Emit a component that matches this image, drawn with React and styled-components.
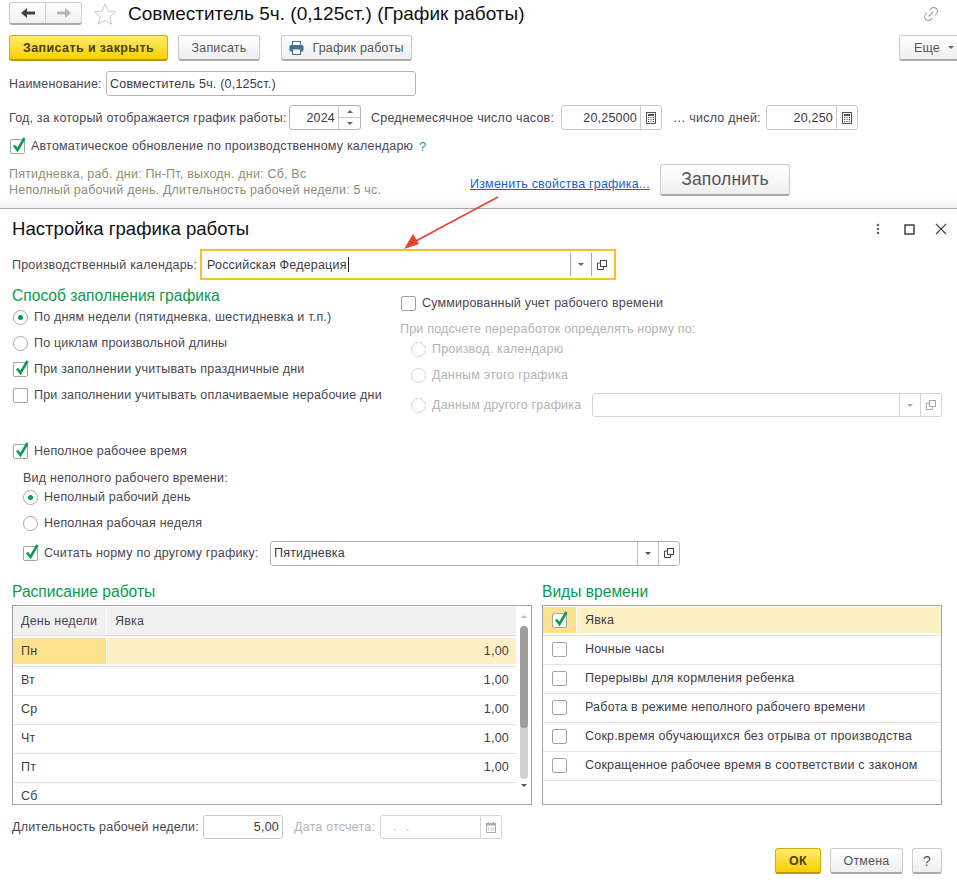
import React from 'react';
import styled, { createGlobalStyle } from 'styled-components';
import { Link2 } from 'lucide-react';

const GREEN = '#0b9a4e';
const TEXT = '#4a4650';
const DISABLED = '#b3b3b3';

const GlobalStyle = createGlobalStyle`
  html, body { margin: 0; padding: 0; background: #fff; }
  body {
    font-family: "Liberation Sans", Arial, sans-serif;
    font-size: 12.5px;
    letter-spacing: 0.2px;
    color: ${TEXT};
  }
`;

const Page = styled.div`
  position: relative;
  width: 957px;
  height: 886px;
  overflow: hidden;
  background: #fff;
`;

const Arrow = styled.svg`
  position: absolute;
  left: 400px;
  top: 190px;
  pointer-events: none;
`;

const Top = styled.section`
  box-sizing: border-box;
  height: 209px;
  padding: 2px 0 0 9px;
  border-bottom: 1px solid #a8a8a8;
  background: linear-gradient(to bottom, #fff 0, #fff 198px, #f1f1f1 208px);
`;

const Row = styled.div`
  display: flex;
  align-items: center;
  height: ${p => p.$h}px;
  margin-top: ${p => p.$top || 0}px;
  margin-left: ${p => p.$left || 0}px;
`;

const NavGroup = styled.div`
  box-sizing: border-box;
  display: flex;
  width: 73px;
  height: 23px;
  border: 1px solid #cdcdcd;
  border-bottom: 2px solid #a9a9a9;
  border-radius: 3px;
  background: linear-gradient(#fff, #f1f1f1);
`;

const NavButton = styled.div`
  flex: 1;
  display: flex;
  align-items: center;
  justify-content: center;
  & + & { border-left: 1px solid #d4d4d4; }
`;

const StarBox = styled.div`
  display: flex;
  margin: 0 11px 0 11px;
`;

const Title = styled.h1`
  margin: 0;
  font-size: 19px;
  font-weight: normal;
  letter-spacing: 0;
  color: #111;
  white-space: nowrap;
`;

const LinkBox = styled.div`
  display: flex;
  margin-left: auto;
  margin-right: 17px;
  color: #9a9a9a;
  transform: rotate(-45deg);
`;

const Button = styled.button`
  box-sizing: border-box;
  display: flex;
  align-items: center;
  justify-content: center;
  gap: 8px;
  width: ${p => p.$w}px;
  height: ${p => p.$h || 26}px;
  margin-left: ${p => p.$left || 0}px;
  padding: 0;
  flex: none;
  font-family: inherit;
  font-size: ${p => p.$size || 12.5}px;
  font-weight: ${p => (p.$primary ? 'bold' : 'normal')};
  letter-spacing: ${p => (p.$primary ? '0.4px' : '0.2px')};
  color: ${p => (p.$primary ? '#4c4008' : '#555')};
  border: 1px solid ${p => (p.$primary ? '#d0ae00' : '#cbcbcb')};
  border-bottom: 2px solid ${p => (p.$primary ? '#b89a00' : '#a9a9a9')};
  border-radius: 3px;
  background: ${p =>
    p.$primary
      ? 'linear-gradient(#ffec6e, #f7d000)'
      : 'linear-gradient(#fff, #efefef)'};
`;

const Caret = styled.span`
  width: 0;
  height: 0;
  border-left: 3px solid transparent;
  border-right: 3px solid transparent;
  border-${p => (p.$up ? 'bottom' : 'top')}: 3px solid ${p => p.$color || '#666'};
`;

const Label = styled.span`
  box-sizing: border-box;
  flex: none;
  width: ${p => (p.$w ? `${p.$w}px` : 'auto')};
  padding-left: ${p => p.$pad || 0}px;
  color: ${p => (p.$disabled ? DISABLED : TEXT)};
  white-space: nowrap;
`;

const Field = styled.div`
  box-sizing: border-box;
  display: flex;
  align-items: stretch;
  flex: none;
  width: ${p => p.$w}px;
  height: ${p => p.$h || 25}px;
  border: 1px solid ${p => p.$border || '#c9c9c9'};
  border-radius: 3px;
  background: #fff;
`;

const FocusField = styled(Field)`
  border: 2px solid #fac21f;
  border-radius: 0;
  padding: 2px 2px 2px 0;
`;

const FieldText = styled.span`
  flex: 1;
  display: flex;
  align-items: center;
  justify-content: ${p => (p.$right ? 'flex-end' : 'flex-start')};
  padding: 0 ${p => (p.$right ? 3 : 0)}px 0 ${p => (p.$right ? 0 : p.$pad || 3)}px;
  color: ${p => (p.$disabled ? DISABLED : '#3d3a42')};
  white-space: nowrap;
`;

const DateMask = styled.span`
  letter-spacing: 3px;
  white-space: pre;
`;

const Cursor = styled.span`
  width: 1px;
  height: 15px;
  margin-left: 1px;
  background: #222;
`;

const FieldButton = styled.span`
  box-sizing: border-box;
  display: flex;
  align-items: center;
  justify-content: center;
  flex: none;
  width: ${p => p.$w || 21}px;
  border-left: 1px solid ${p => p.$line || '#c9c9c9'};
`;

const SpinBox = styled.span`
  display: flex;
  flex-direction: column;
  flex: none;
  width: 21px;
  border-left: 1px solid #c9c9c9;
`;

const SpinPart = styled.span`
  flex: 1;
  display: flex;
  align-items: center;
  justify-content: center;
  & + & { border-top: 1px solid #c9c9c9; }
`;

const GrayNote = styled.div`
  box-sizing: border-box;
  flex: none;
  width: 461px;
  padding-top: 4px;
  line-height: 16px;
  color: #8f8d78;
`;

const LinkText = styled.a`
  flex: none;
  width: 190px;
  padding-top: 8px;
  color: #1d5fc2;
  text-decoration: underline;
  white-space: nowrap;
`;

const Help = styled.span`
  color: #2a8fc9;
  font-size: 13px;
`;

const Dialog = styled.section`
  padding-left: 12px;
`;

const DialogHead = styled.header`
  display: flex;
  align-items: center;
  height: 40px;
`;

const DialogTitle = styled.h2`
  margin: 0;
  font-size: 18.6px;
  font-weight: normal;
  letter-spacing: 0;
  color: #111;
`;

const WindowIcons = styled.div`
  display: flex;
  align-items: center;
  gap: 18px;
  margin-left: auto;
  margin-right: 10px;
`;

const Columns = styled.div`
  display: flex;
  height: 130px;
  margin-top: 7px;
`;

const LeftColumn = styled.div`
  flex: none;
  width: 388px;
`;

const RightColumn = styled.div`
  padding-top: 3px;
`;

const SectionTitle = styled.h3`
  margin: 0;
  height: 18px;
  line-height: 18px;
  font-size: 15.6px;
  font-weight: normal;
  letter-spacing: 0;
  color: ${GREEN};
  white-space: nowrap;
`;

const Option = styled.div`
  display: flex;
  align-items: center;
  gap: 6px;
  height: ${p => p.$h || 26}px;
  margin-left: ${p => p.$left || 1}px;
  margin-top: ${p => p.$top || 0}px;
  color: ${p => (p.$disabled ? DISABLED : TEXT)};
  white-space: nowrap;
`;

const BoxShape = styled.span`
  position: relative;
  box-sizing: border-box;
  display: block;
  flex: none;
  width: 15px;
  height: 15px;
  border: 1px solid #a3a3a3;
  border-radius: 2px;
  background: #fff;
`;

const CheckMark = styled.svg`
  position: absolute;
  left: 0;
  top: -4px;
`;

const RadioShape = styled.span`
  box-sizing: border-box;
  display: flex;
  align-items: center;
  justify-content: center;
  flex: none;
  width: 15px;
  height: 15px;
  border: 1px solid ${p => (p.$disabled ? '#d4d4d4' : '#a9a9a9')};
  border-radius: 50%;
  background: #fff;
`;

const RadioDot = styled.span`
  width: 5px;
  height: 5px;
  border-radius: 50%;
  background: ${GREEN};
`;

const Tables = styled.div`
  display: flex;
  margin-top: 17px;
`;

const TableColumn = styled.div`
  flex: none;
  width: ${p => p.$w}px;
  margin-left: ${p => p.$left || 0}px;
`;

const TableFrame = styled.div`
  box-sizing: border-box;
  display: flex;
  height: 200px;
  margin-top: 4px;
  border: 1px solid #a3a3a3;
  overflow: hidden;
`;

const TableBody = styled.div`
  flex: 1;
  min-width: 0;
  padding-top: 1px;
`;

const HeadRow = styled.div`
  display: grid;
  grid-template-columns: 93px 1fr;
  column-gap: 1px;
  height: 29px;
  margin-bottom: 2px;
  border-bottom: 1px solid #dcdcdc;
  box-sizing: border-box;
  background: #fff;
`;

const HeadCell = styled.div`
  display: flex;
  align-items: center;
  padding-left: 8px;
  background: #f1f1f1;
`;

const DataRow = styled.div`
  box-sizing: border-box;
  display: grid;
  grid-template-columns: ${p => p.$cols};
  column-gap: 1px;
  height: 29px;
  padding-bottom: 2px;
  border-bottom: 1px solid #e3e3e3;
  color: #3f3c45;
`;

const Cell = styled.div`
  display: flex;
  align-items: center;
  justify-content: ${p => (p.$right ? 'flex-end' : 'flex-start')};
  padding: ${p => (p.$right ? '0 7px 0 0' : p.$pad || '0 0 0 8px')};
  background: ${p => p.$bg || 'transparent'};
  white-space: nowrap;
`;

const ScrollBar = styled.div`
  position: relative;
  flex: none;
  display: flex;
  flex-direction: column;
  align-items: center;
  width: 15px;
  padding-top: 9px;
`;

const Track = styled.div`
  width: 8px;
  height: 153px;
  margin-top: 8px;
  border-radius: 4px;
  background: #d0d0d0;
  overflow: hidden;
`;

const Thumb = styled.div`
  height: 102px;
  border-radius: 4px;
  background: #9c9c9c;
`;

const ScrollEnd = styled.div`
  margin-top: 8px;
`;

const Footer = styled.div`
  display: flex;
  justify-content: flex-end;
  margin: 9px 15px 0 0;
`;

const Star = () => (
  <svg width="24" height="22" viewBox="0 0 24 22" fill="none">
    <path
      d="M12 1l3 7.2 7.6.6-5.8 5 1.8 7.4L12 17.3l-6.6 3.9 1.8-7.4-5.8-5L9 8.2z"
      stroke="#c9c9c9"
      strokeWidth="1"
    />
  </svg>
);

const NavArrow = ({ left, color }) => (
  <svg width="14" height="12" viewBox="0 0 14 12">
    <path
      d={left ? 'M0 6l6-5v3.4h8v3.2H6V11z' : 'M14 6L8 1v3.4H0v3.2h8V11z'}
      fill={color}
    />
  </svg>
);

const Printer = () => (
  <svg width="15" height="14" viewBox="0 0 15 14">
    <rect x="3.5" y="0.5" width="8" height="4" fill="#fff" stroke="#50708c" />
    <rect x="0.5" y="4" width="14" height="6.5" rx="1.5" fill="#46708f" />
    <rect x="3.5" y="8" width="8" height="5.5" fill="#fff" stroke="#50708c" />
  </svg>
);

const Calc = () => (
  <svg width="11" height="12" viewBox="0 0 11 12" fill="none">
    <rect x="0.5" y="0.5" width="9" height="11" stroke="#555" />
    <rect x="2" y="2" width="6" height="2" fill="#555" />
    <path
      d="M2 5.5h1.2M4.4 5.5h1.2M6.8 5.5H8M2 7.5h1.2M4.4 7.5h1.2M6.8 7.5H8M2 9.5h1.2M4.4 9.5h1.2M6.8 9.5H8"
      stroke="#555"
    />
  </svg>
);

const CalendarIcon = () => (
  <svg width="11" height="11" viewBox="0 0 11 11" fill="none">
    <rect x="0.5" y="1.5" width="9" height="9" stroke="#aaa" />
    <rect x="0.5" y="1.5" width="9" height="2" fill="#aaa" />
    <path d="M2.5 0v2M7.5 0v2M2 6h1.2M4.4 6h1.2M6.8 6H8M2 8h1.2M4.4 8h1.2M6.8 8H8" stroke="#aaa" />
  </svg>
);

const OpenIcon = ({ color = '#444' }) => (
  <svg width="10" height="10" viewBox="0 0 10 10" fill="none">
    <rect x="3.5" y="0.5" width="6" height="6" stroke={color} />
    <path d="M3 3H.5v6.5H6.5V7" stroke={color} />
  </svg>
);

const Check = ({ checked }) => (
  <BoxShape>
    {checked && (
      <CheckMark width="16" height="17" viewBox="0 0 16 17">
        <path d="M3 9.5l3.5 4.5L13.5 2" fill="none" stroke={GREEN} strokeWidth="2.6" />
      </CheckMark>
    )}
  </BoxShape>
);

const Radio = ({ on, disabled }) => (
  <RadioShape $disabled={disabled}>{on && <RadioDot />}</RadioShape>
);

const PickField = ({ w, h, value, disabled, line }) => (
  <Field $w={w} $h={h} $border={disabled ? '#d4d4d4' : '#b4b4b4'}>
    <FieldText $pad={3}>{value}</FieldText>
    <FieldButton $line={line}>
      <Caret $color={disabled ? '#aaa' : '#555'} />
    </FieldButton>
    <FieldButton $line={line}>
      <OpenIcon color={disabled ? '#aaa' : '#444'} />
    </FieldButton>
  </Field>
);

const days = ['Вт', 'Ср', 'Чт', 'Пт'];
const kinds = [
  'Ночные часы',
  'Перерывы для кормления ребенка',
  'Работа в режиме неполного рабочего времени',
  'Сокр.время обучающихся без отрыва от производства',
  'Сокращенное рабочее время в соответствии с законом',
];

export default function App() {
  return (
    <Page>
      <GlobalStyle />
      <Top>
        <Row $h={23}>
          <NavGroup>
            <NavButton><NavArrow left color="#444" /></NavButton>
            <NavButton><NavArrow color="#b5b5b5" /></NavButton>
          </NavGroup>
          <StarBox><Star /></StarBox>
          <Title>Совместитель 5ч. (0,125ст.) (График работы)</Title>
          <LinkBox><Link2 size={18} strokeWidth={1.4} /></LinkBox>
        </Row>
        <Row $h={26} $top={10}>
          <Button $w={159} $primary>Записать и закрыть</Button>
          <Button $w={82} $left={10}>Записать</Button>
          <Button $w={131} $left={21}><Printer />График работы</Button>
          <Button $w={70} $left={487}>Еще<Caret /></Button>
        </Row>
        <Row $h={25} $top={10}>
          <Label $w={97}>Наименование:</Label>
          <Field $w={310} $border="#b4b4b4"><FieldText>Совместитель 5ч. (0,125ст.)</FieldText></Field>
        </Row>
        <Row $h={25} $top={9}>
          <Label $w={280}>Год, за который отображается график работы:</Label>
          <Field $w={72} $border="#b4b4b4">
            <FieldText $right>2024</FieldText>
            <SpinBox>
              <SpinPart><Caret $up /></SpinPart>
              <SpinPart><Caret /></SpinPart>
            </SpinBox>
          </Field>
          <Label $w={200} $pad={10}>Среднемесячное число часов:</Label>
          <Field $w={101}>
            <FieldText $right>20,25000</FieldText>
            <FieldButton><Calc /></FieldButton>
          </Field>
          <Label $w={104} $pad={11}>… число дней:</Label>
          <Field $w={92}>
            <FieldText $right>20,250</FieldText>
            <FieldButton><Calc /></FieldButton>
          </Field>
        </Row>
        <Option $h={18} $top={7}>
          <Check checked />
          <span>Автоматическое обновление по производственному календарю</span>
          <Help>?</Help>
        </Option>
        <Row $h={32} $top={9}>
          <GrayNote>
            Пятидневка, раб. дни: Пн-Пт, выходн. дни: Сб, Вс
            <br />
            Неполный рабочий день. Длительность рабочей недели: 5 чс.
          </GrayNote>
          <LinkText>Изменить свойства графика...</LinkText>
          <Button $w={130} $h={32} $size={17.5}>Заполнить</Button>
        </Row>
      </Top>

      <Dialog>
        <DialogHead>
          <DialogTitle>Настройка графика работы</DialogTitle>
          <WindowIcons>
            <svg width="4" height="12" viewBox="0 0 4 12" fill="#666">
              <circle cx="2" cy="2" r="1.3" /><circle cx="2" cy="6" r="1.3" /><circle cx="2" cy="10" r="1.3" />
            </svg>
            <svg width="11" height="11" viewBox="0 0 11 11" fill="none" style={{ marginLeft: 6 }}>
              <rect x="1" y="1" width="9" height="9" stroke="#333" strokeWidth="1.4" />
            </svg>
            <svg width="12" height="12" viewBox="0 0 12 12" fill="none" style={{ marginLeft: 2 }}>
              <path d="M1 1l10 10M11 1L1 11" stroke="#444" strokeWidth="1.1" />
            </svg>
          </WindowIcons>
        </DialogHead>
        <Row $h={31}>
          <Label $w={188}>Производственный календарь:</Label>
          <FocusField $w={416} $h={31}>
            <FieldText $pad={5}>Российская Федерация<Cursor /></FieldText>
            <FieldButton $line="#a9a9a9"><Caret /></FieldButton>
            <FieldButton $line="#a9a9a9"><OpenIcon /></FieldButton>
          </FocusField>
        </Row>
        <Columns>
          <LeftColumn>
            <SectionTitle>Способ заполнения графика</SectionTitle>
            <Option $h={26} $top={-1}><Radio on />По дням недели (пятидневка, шестидневка и т.п.)</Option>
            <Option><Radio />По циклам произвольной длины</Option>
            <Option><Check checked />При заполнении учитывать праздничные дни</Option>
            <Option><Check />При заполнении учитывать оплачиваемые нерабочие дни</Option>
          </LeftColumn>
          <RightColumn>
            <Option $left={1}><Check />Суммированный учет рабочего времени</Option>
            <Row $h={18} $top={4}><Label $disabled>При подсчете переработок определять норму по:</Label></Row>
            <Option $left={11} $h={22} $disabled><Radio disabled />Производ. календарю</Option>
            <Option $left={11} $top={2} $disabled><Radio disabled />Данным этого графика</Option>
            <Option $left={11} $h={24} $top={5} $disabled>
              <Radio disabled />
              <Label $w={154} $disabled>Данным другого графика</Label>
              <PickField w={350} h={24} disabled line="#d4d4d4" />
            </Option>
          </RightColumn>
        </Columns>
        <Option $top={21}><Check checked />Неполное рабочее время</Option>
        <Row $h={18} $top={5} $left={11}><Label>Вид неполного рабочего времени:</Label></Row>
        <Option $left={11} $top={-3}><Radio on />Неполный рабочий день</Option>
        <Option $left={11}><Radio />Неполная рабочая неделя</Option>
        <Option $left={11} $top={4}>
          <Check checked />
          <Label $w={220}>Считать норму по другому графику:</Label>
          <PickField w={410} h={25} value="Пятидневка" line="#c4c4c4" />
        </Option>
        <Tables>
          <TableColumn $w={520}>
            <SectionTitle>Расписание работы</SectionTitle>
            <TableFrame>
              <TableBody>
                <HeadRow>
                  <HeadCell>День недели</HeadCell>
                  <HeadCell>Явка</HeadCell>
                </HeadRow>
                <DataRow $cols="93px 1fr">
                  <Cell $bg="#fee18d">Пн</Cell>
                  <Cell $bg="#fdf1c3" $right>1,00</Cell>
                </DataRow>
                {days.map(day => (
                  <DataRow key={day} $cols="93px 1fr">
                    <Cell>{day}</Cell>
                    <Cell $right>1,00</Cell>
                  </DataRow>
                ))}
                <DataRow $cols="93px 1fr">
                  <Cell>Сб</Cell>
                  <Cell />
                </DataRow>
              </TableBody>
              <ScrollBar>
                <Caret $up $color="#bbb" />
                <Track><Thumb /></Track>
                <ScrollEnd><Caret $color="#555" /></ScrollEnd>
              </ScrollBar>
            </TableFrame>
          </TableColumn>
          <TableColumn $w={400} $left={10}>
            <SectionTitle>Виды времени</SectionTitle>
            <TableFrame>
              <TableBody>
                <DataRow $cols="33px 1fr">
                  <Cell $bg="#fee18d" $pad="0 0 0 9px"><Check checked /></Cell>
                  <Cell $bg="#fdf1c3">Явка</Cell>
                </DataRow>
                {kinds.map(kind => (
                  <DataRow key={kind} $cols="33px 1fr">
                    <Cell $pad="0 0 0 9px"><Check /></Cell>
                    <Cell>{kind}</Cell>
                  </DataRow>
                ))}
              </TableBody>
            </TableFrame>
          </TableColumn>
        </Tables>
        <Row $h={24} $top={10}>
          <Label $w={191}>Длительность рабочей недели:</Label>
          <Field $w={80} $h={24}><FieldText $right>5,00</FieldText></Field>
          <Label $w={97} $pad={11} $disabled>Дата отсчета:</Label>
          <Field $w={122} $h={24} $border="#d4d4d4">
            <FieldText $pad={12} $disabled><DateMask>. .</DateMask></FieldText>
            <FieldButton $line="#d4d4d4"><CalendarIcon /></FieldButton>
          </Field>
        </Row>
        <Footer>
          <Button $w={46} $primary>ОК</Button>
          <Button $w={73} $left={9}>Отмена</Button>
          <Button $w={30} $left={9} $size={14}>?</Button>
        </Footer>
      </Dialog>

      <Arrow width="110" height="65" viewBox="0 0 110 65">
        <path d="M98 7L14 52" stroke="#e5432f" strokeWidth="1.6" fill="none" />
        <path d="M4 59l9-15 6 10z" fill="#e5432f" />
      </Arrow>
    </Page>
  );
}
